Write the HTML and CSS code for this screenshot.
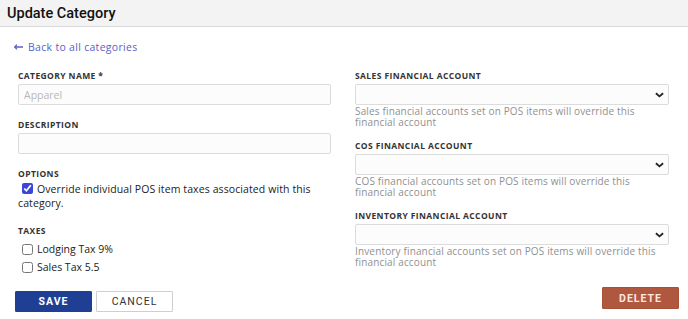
FILE: index.html
```html
<!DOCTYPE html>
<html>
<head>
<meta charset="utf-8">
<link rel="stylesheet" href="styles.css">
</head>
<body>
<header class="topbar"><h1 class="title">Update Category</h1></header>
<main class="page">
  <a class="back" href="#"><svg class="arrow" viewBox="0 0 9 6" width="9" height="6"><path d="M0.5 3h8.5M3 0.6L0.6 3 3 5.4" fill="none" stroke="#5b5fc4" stroke-width="1.3"/></svg>Back to all categories</a>
  <div class="cols">
    <div class="col col-left">
      <div class="field">
        <label class="label">Category Name *</label>
        <input class="input" type="text" placeholder="Apparel">
      </div>
      <div class="field">
        <label class="label">Description</label>
        <input class="input" type="text">
      </div>
      <div class="field options">
        <div class="label">Options</div>
        <label class="check check-wrap"><input type="checkbox" checked><span>Override individual POS item taxes associated with this category.</span></label>
      </div>
      <div class="field taxes">
        <div class="label">Taxes</div>
        <label class="check"><input type="checkbox"><span>Lodging Tax 9%</span></label>
        <label class="check"><input type="checkbox"><span>Sales Tax 5.5</span></label>
      </div>
      <div class="actions">
        <button class="btn btn-primary">Save</button>
        <button class="btn btn-outline">Cancel</button>
      </div>
    </div>
    <div class="col col-right">
      <div class="field rfield">
        <label class="label">Sales Financial Account</label>
        <div class="select"><svg class="chev" viewBox="0 0 10 6" width="9" height="6"><path d="M1 1l4 3.5L9 1" fill="none" stroke="#222" stroke-width="2"/></svg></div>
        <p class="help">Sales financial accounts set on POS items will override this financial account</p>
      </div>
      <div class="field rfield">
        <label class="label">COS Financial Account</label>
        <div class="select"><svg class="chev" viewBox="0 0 10 6" width="9" height="6"><path d="M1 1l4 3.5L9 1" fill="none" stroke="#222" stroke-width="2"/></svg></div>
        <p class="help">COS financial accounts set on POS items will override this financial account</p>
      </div>
      <div class="field rfield">
        <label class="label">Inventory Financial Account</label>
        <div class="select"><svg class="chev" viewBox="0 0 10 6" width="9" height="6"><path d="M1 1l4 3.5L9 1" fill="none" stroke="#222" stroke-width="2"/></svg></div>
        <p class="help">Inventory financial accounts set on POS items will override this financial account</p>
      </div>
      <div class="actions actions-right">
        <button class="btn btn-danger">Delete</button>
      </div>
    </div>
  </div>
</main>
</body>
</html>
```
FILE: styles.css
```css
* { box-sizing: border-box; }
body {
  margin: 0;
  font-family: "Open Sans", "Liberation Sans", sans-serif;
  color: #222;
  background: #fff;
  width: 688px;
  height: 319px;
  overflow: hidden;
}
.topbar {
  height: 27px;
  background: #f3f3f3;
  border-bottom: 1px solid #d9d9d9;
  display: flex;
  align-items: center;
  padding-left: 7px;
}
.title {
  margin: 0;
  font-family: "Roboto", "Liberation Sans", sans-serif;
  font-size: 14.5px;
  font-weight: 500;
  color: #111;
}
.page { padding: 13px 0 0 14px; }
.back {
  display: flex;
  align-items: center;
  gap: 5px;
  font-size: 10.5px;
  color: #5b5fc4;
  text-decoration: none;
  letter-spacing: 0.3px;
  line-height: 14px;
  height: 14px;
}
.cols {
  display: flex;
  gap: 24px;
  margin-top: 16px;
}
.col-left { width: 317px; padding-left: 4px; }
.col-right { width: 314px; }
.field { display: flex; flex-direction: column; margin-bottom: 14px; }
.label {
  font-size: 8.5px;
  font-weight: 700;
  text-transform: uppercase;
  letter-spacing: 0.4px;
  color: #333;
  line-height: 11px;
  height: 11px;
  margin-bottom: 3px;
}
.input {
  height: 21px;
  border: 1px solid #dcdcdc;
  border-radius: 2px;
  background: #fcfcfc;
  font-family: inherit;
  font-size: 10.5px;
  padding: 0 5px;
  width: 313px;
}
.input::placeholder { color: #b8b8b8; }
.select {
  height: 21px;
  border: 1px solid #dcdcdc;
  border-radius: 2px;
  background: #fcfcfc;
  width: 314px;
  display: flex;
  align-items: center;
  justify-content: flex-end;
  padding-right: 4px;
}
.rfield { margin-bottom: 12px; }
.help {
  margin: 1px 0 0;
  font-size: 10px;
  color: #909090;
  line-height: 11px;
  letter-spacing: 0.15px;
}
.options { margin-bottom: 16px; }
.options .label { margin-bottom: 2px; }
.check {
  display: flex;
  align-items: flex-start;
  gap: 4px;
  font-size: 10.5px;
  line-height: 14px;
  color: #222;
  margin-bottom: 4px;
}
.check input { margin: 2px 0 0 4px; width: 11px; height: 11px; accent-color: #3b46d8; }
.check-wrap { display: block; letter-spacing: 0.1px; margin-bottom: 0; height: 28px; }
.check-wrap input { vertical-align: -1px; margin-right: 4px; }
.taxes { margin-bottom: 13px; }
.taxes .label { margin-bottom: 6px; }
.actions { display: flex; gap: 4px; margin-left: -3px; }
.actions-right { justify-content: flex-end; margin-top: 19px; margin-right: -10px; }
.btn {
  width: 77px;
  height: 21px;
  font-family: "Roboto", "Liberation Sans", sans-serif;
  font-size: 10.5px;
  text-transform: uppercase;
  letter-spacing: 1px;
  border-radius: 1px;
  cursor: pointer;
}
.btn-primary { background: #1e3f94; color: #fff; border: 1px solid #1e3f94; font-weight: 700; }
.btn-outline { background: #fff; color: #333; border: 1px solid #cfcfcf; }
.btn-danger { background: #b0573f; color: #ffe8e0; border: 1px solid #a85038; font-weight: 700; height: 22px; }
```
